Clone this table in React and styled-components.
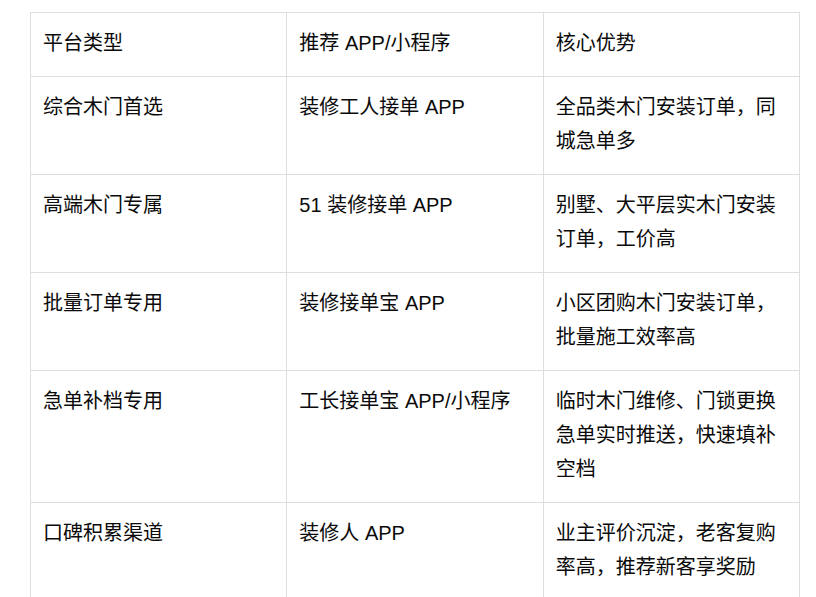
import styled, { createGlobalStyle } from "styled-components";

const GlobalStyle = createGlobalStyle`
    html, body {
        margin: 0;
        padding: 0;
        background: #fff;
    }
`;

const rows = [
    ["综合木门首选", "装修工人接单 APP", "全品类木门安装订单，同城急单多"],
    ["高端木门专属", "51 装修接单 APP", "别墅、大平层实木门安装订单，工价高"],
    ["批量订单专用", "装修接单宝 APP", "小区团购木门安装订单，批量施工效率高"],
    ["急单补档专用", "工长接单宝 APP/小程序", "临时木门维修、门锁更换急单实时推送，快速填补空档"],
    ["口碑积累渠道", "装修人 APP", "业主评价沉淀，老客复购率高，推荐新客享奖励"],
];

function App() {
    return (
        <Page>
            <GlobalStyle />
            <Table>
                <thead>
                    <tr>
                        <Cell as="th">平台类型</Cell>
                        <Cell as="th">推荐 APP/小程序</Cell>
                        <Cell as="th">核心优势</Cell>
                    </tr>
                </thead>
                <tbody>
                    {rows.map((row) => (
                        <tr key={row[0]}>
                            {row.map((text, i) => (
                                <Cell key={i}>{text}</Cell>
                            ))}
                        </tr>
                    ))}
                </tbody>
            </Table>
        </Page>
    );
}

export default App;

const Page = styled.div`
    padding: 12px 16px 0 30px;
    font-family: "Liberation Sans", "Noto Sans CJK SC", sans-serif;
    font-size: 20px;
    color: #0a0a0a;
`;

const Table = styled.table`
    width: 100%;
    table-layout: fixed;
    border-collapse: collapse;
`;

const Cell = styled.td`
    border: 1px solid #dedede;
    padding: 13px 12px 16px 12px;
    line-height: 34px;
    font-weight: normal;
    text-align: left;
    vertical-align: top;
`;
